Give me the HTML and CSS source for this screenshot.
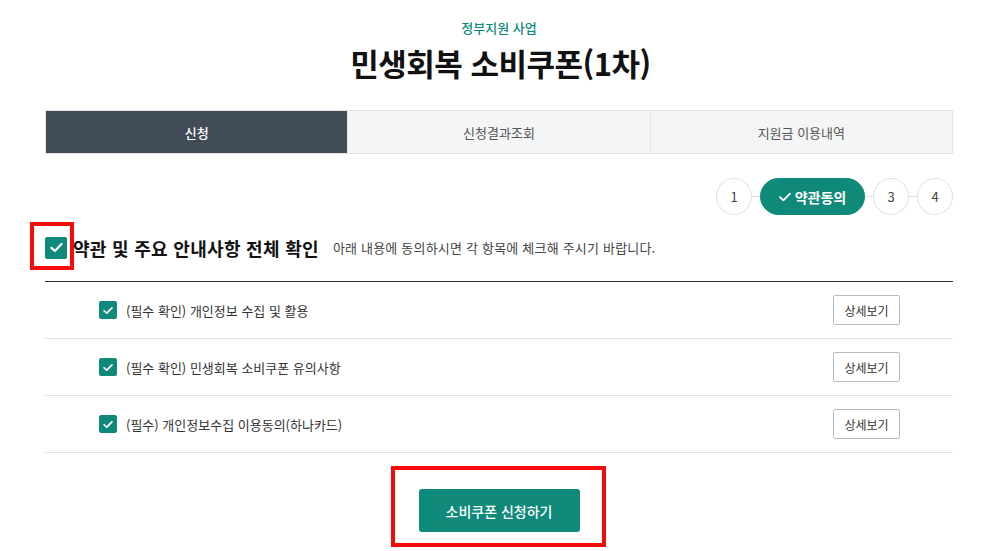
FILE: index.html
```html
<!DOCTYPE html>
<html lang="ko">
<head>
<meta charset="utf-8">
<title>민생회복 소비쿠폰(1차)</title>
<link rel="stylesheet" href="styles.css">
</head>
<body>
<div class="page">
  <header class="head">
    <p class="eyebrow">정부지원 사업</p>
    <h1 class="title">민생회복 소비쿠폰(1차)</h1>
  </header>

  <nav class="tabs">
    <div class="tab active">신청</div>
    <div class="tab">신청결과조회</div>
    <div class="tab">지원금 이용내역</div>
  </nav>

  <div class="steps">
    <span class="step">1</span>
    <span class="bar"></span>
    <span class="step current">
      <svg class="tick" viewBox="0 0 12 10" width="12" height="10"><path d="M1 5.2 L4.4 8.4 L11 1.6" fill="none" stroke="#fff" stroke-width="1.8" stroke-linecap="round" stroke-linejoin="round"/></svg>약관동의</span>
    <span class="bar"></span>
    <span class="step">3</span>
    <span class="bar"></span>
    <span class="step">4</span>
  </div>

  <section class="agree">
    <div class="all">
      <span class="cb big">
        <svg viewBox="0 0 12 10" width="13" height="11"><path d="M1.3 5.3 L4.5 8.2 L10.7 1.8" fill="none" stroke="#fff" stroke-width="2" stroke-linecap="round" stroke-linejoin="round"/></svg>
      </span>
      <span class="mark mark-cb"></span>
      <strong class="all-title">약관 및 주요 안내사항 전체 확인</strong>
      <span class="all-desc">아래 내용에 동의하시면 각 항목에 체크해 주시기 바랍니다.</span>
    </div>

    <ul class="list">
      <li class="item">
        <span class="cb"><svg viewBox="0 0 12 10" width="10" height="9"><path d="M1.3 5.3 L4.5 8.2 L10.7 1.8" fill="none" stroke="#fff" stroke-width="2" stroke-linecap="round" stroke-linejoin="round"/></svg></span>
        <span class="label">(필수 확인) 개인정보 수집 및 활용</span>
        <button class="more" type="button">상세보기</button>
      </li>
      <li class="item">
        <span class="cb"><svg viewBox="0 0 12 10" width="10" height="9"><path d="M1.3 5.3 L4.5 8.2 L10.7 1.8" fill="none" stroke="#fff" stroke-width="2" stroke-linecap="round" stroke-linejoin="round"/></svg></span>
        <span class="label">(필수 확인) 민생회복 소비쿠폰 유의사항</span>
        <button class="more" type="button">상세보기</button>
      </li>
      <li class="item">
        <span class="cb"><svg viewBox="0 0 12 10" width="10" height="9"><path d="M1.3 5.3 L4.5 8.2 L10.7 1.8" fill="none" stroke="#fff" stroke-width="2" stroke-linecap="round" stroke-linejoin="round"/></svg></span>
        <span class="label">(필수) 개인정보수집 이용동의(하나카드)</span>
        <button class="more" type="button">상세보기</button>
      </li>
    </ul>
  </section>

  <div class="submit-wrap">
    <div class="submit-frame">
      <button class="submit" type="button">소비쿠폰 신청하기</button>
    </div>
  </div>
</div>
</body>
</html>
```
FILE: styles.css
```css
* { box-sizing: border-box; }
html, body { margin: 0; padding: 0; background: #fff; }
body {
  font-family: "Noto Sans CJK KR", "Noto Sans", sans-serif;
  color: #222;
}
.page {
  width: 908px;
  margin-left: 45px;
}
.head { text-align: center; padding-top: 18px; }
.eyebrow {
  margin: 0;
  font-size: 13px;
  line-height: 20px;
  color: #0f8a7a;
  font-weight: 500;
}
.title {
  margin: 5px 0 0;
  padding-left: 3px;
  font-size: 31px;
  line-height: 40px;
  font-weight: 700;
  color: #111;
  letter-spacing: -0.5px;
}
.tabs {
  display: flex;
  margin-top: 27px;
  border: 1px solid #e2e4e6;
  height: 44px;
}
.tab {
  flex: 1;
  display: flex;
  align-items: center;
  justify-content: center;
  background: #f4f5f6;
  color: #555;
  font-size: 13px;
  border-left: 1px solid #e2e4e6;
}
.tab:first-child { border-left: 0; }
.tab.active { background: #414c56; color: #fff; font-weight: 500; }

.steps {
  display: flex;
  justify-content: flex-end;
  align-items: center;
  margin-top: 24px;
}
.step {
  width: 36px;
  height: 37px;
  border-radius: 50%;
  border: 1px solid #e0e0e0;
  display: flex;
  align-items: center;
  justify-content: center;
  font-size: 13px;
  color: #444;
  background: #fff;
}
.step.current {
  width: 105px;
  border-radius: 19px;
  border-color: #0f8a7a;
  background: #0f8a7a;
  color: #fff;
  font-weight: 700;
  font-size: 14px;
  gap: 4px;
}
.bar { width: 8px; height: 1px; background: #e0e0e0; }

.agree { margin-top: 21px; }
.all {
  position: relative;
  display: flex;
  align-items: center;
  height: 23px;
  margin-bottom: 22px;
}
.cb {
  display: inline-flex;
  align-items: center;
  justify-content: center;
  width: 18px;
  height: 18px;
  border-radius: 2px;
  background: #0f8a7a;
  flex: none;
}
.cb.big { width: 22px; height: 22px; }
.mark {
  position: absolute;
  border: 4px solid #f50a0a;
}
.mark-cb { left: -15px; top: -14px; width: 44px; height: 48px; }
.all-title {
  margin-left: 6px;
  font-size: 18px;
  font-weight: 700;
  color: #111;
  letter-spacing: 0.3px;
}
.all-desc {
  margin-left: 14px;
  font-size: 13px;
  color: #444;
  letter-spacing: 0.2px;
}
.list {
  list-style: none;
  margin: 0;
  padding: 0;
  border-top: 1px solid #333;
}
.item {
  display: flex;
  align-items: center;
  height: 57px;
  padding: 0 53px 0 54px;
  border-bottom: 1px solid #e2e2e2;
}
.label {
  margin-left: 9px;
  font-size: 13px;
  color: #333;
  flex: 1;
}
.more {
  width: 67px;
  height: 30px;
  border: 1px solid #bbb;
  border-radius: 2px;
  background: #fff;
  font-family: inherit;
  font-size: 12px;
  color: #333;
  padding: 0;
}
.submit-wrap {
  display: flex;
  justify-content: center;
  margin-top: 13px;
  padding-left: 0;
  padding-right: 2px;
}
.submit-frame {
  border: 4px solid #f50a0a;
  padding: 19px 24px 11px 24px;
  width: 215px;
}
.submit {
  display: block;
  width: 161px;
  height: 43px;
  border: 0;
  border-radius: 3px;
  background: #0f8a7a;
  color: #fff;
  font-family: inherit;
  font-size: 14px;
  font-weight: 500;
}
```
